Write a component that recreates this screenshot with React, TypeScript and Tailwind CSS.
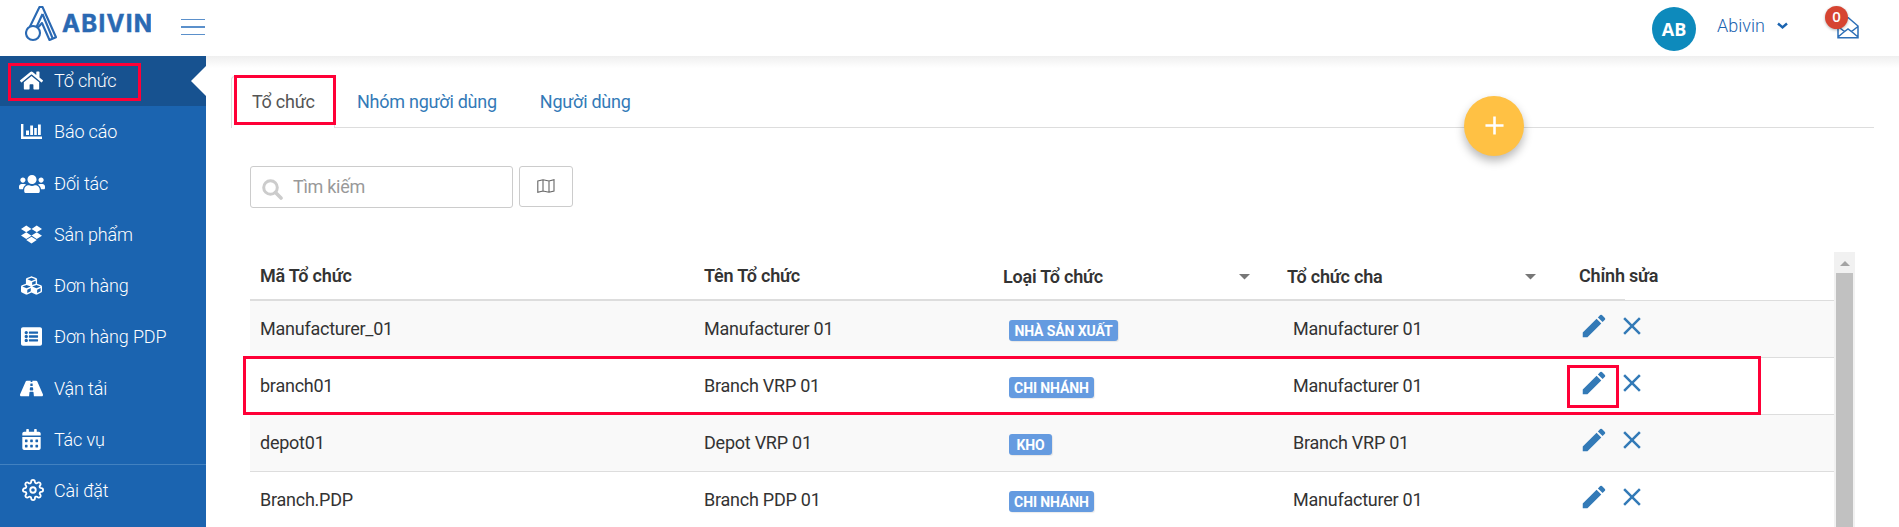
import React from "react";
import { FaHome, FaUsers, FaDropbox, FaCubes, FaListAlt, FaRoad, FaCalendarAlt } from "react-icons/fa";
import { FiSettings } from "react-icons/fi";
import { MdEdit, MdClose, MdAdd } from "react-icons/md";

const ROBOTO = "font-[Roboto,'Liberation_Sans',sans-serif]";

function BarsIcon({ size }: { size: number }) {
  return (
    <svg width={size} height={size} viewBox="0 0 21 21" fill="currentColor">
      <path d="M0 3 H2.4 V15.6 H21 V18 H0 Z M5 9.5 H8 V14 H5 Z M9.2 4.5 H12 V14 H9.2 Z M13.2 7 H15.8 V14 H13.2 Z M17 3.5 H19.8 V14 H17 Z" />
    </svg>
  );
}

const nav = [
  { label: "Tổ chức", Icon: FaHome, size: 23, offset: "pb-px" },
  { label: "Báo cáo", Icon: BarsIcon, size: 21, offset: "pb-[2px]" },
  { label: "Đối tác", Icon: FaUsers, size: 26, offset: "" },
  { label: "Sản phẩm", Icon: FaDropbox, size: 21, offset: "" },
  { label: "Đơn hàng", Icon: FaCubes, size: 21, offset: "" },
  { label: "Đơn hàng PDP", Icon: FaListAlt, size: 21, offset: "" },
  { label: "Vận tải", Icon: FaRoad, size: 23, offset: "pt-[2px]" },
  { label: "Tác vụ", Icon: FaCalendarAlt, size: 21, offset: "pt-[2px]" },
];

const rows = [
  { code: "Manufacturer_01", name: "Manufacturer 01", type: "NHÀ SẢN XUẤT", parent: "Manufacturer 01", width: "w-[109px]" },
  { code: "branch01", name: "Branch VRP 01", type: "CHI NHÁNH", parent: "Manufacturer 01", width: "w-[85px]" },
  { code: "depot01", name: "Depot VRP 01", type: "KHO", parent: "Branch VRP 01", width: "w-[43px]" },
  { code: "Branch.PDP", name: "Branch PDP 01", type: "CHI NHÁNH", parent: "Manufacturer 01", width: "w-[85px]" },
];

function Logo() {
  return (
    <svg width="126" height="36" viewBox="0 0 126 36" fill="none" stroke="#2a69b3" strokeWidth="2.1">
      <circle cx="8" cy="27" r="7" />
      <path d="M5 20.5 L14.5 1 H17.5 L31 31.2 L24.5 34 L17 17 L12.5 22" strokeLinejoin="round" />
      <path d="M17.5 8 L11.5 21 M17.5 8 L27.5 32" />
      <text x="37" y="26" fill="#2a69b3" strokeWidth="0.5" fontFamily="Inter, sans-serif" fontWeight="700" fontSize="24" textLength="90" lengthAdjust="spacing">ABIVIN</text>
    </svg>
  );
}

function Header() {
  return (
    <header className="relative z-10 flex h-14 shrink-0 items-start bg-white">
      <div className="pt-[6px] pl-[25px]"><Logo /></div>
      <div className="mt-[19px] ml-[30px] flex w-6 flex-col">
        <span className="h-px bg-[#5b90cb]" />
        <span className="mt-[6px] h-[2px] bg-[#5b90cb]" />
        <span className="mt-[6px] h-px bg-[#5b90cb]" />
      </div>
      <div className="mt-[7px] ml-auto flex size-11 items-center justify-center rounded-full bg-[#0d8abc] font-['Open_Sans',sans-serif] text-[18px] font-bold text-white">AB</div>
      <div className="mt-[12px] ml-[21px] w-[60px] text-[18px] leading-[27px] font-light text-[#1b64b0]">Abivin</div>
      <svg className="mt-[22px]" width="11" height="8" viewBox="0 0 11 8" fill="none" stroke="#1b64b0" strokeWidth="2.4"><path d="M1 1.5 L5.5 5.5 L10 1.5" /></svg>
      <div className="relative mt-[17px] mr-10 ml-[49px] h-[22px] w-[22px]">
        <svg width="22" height="22" viewBox="0 0 22 22" fill="none" stroke="#2d6fb7" strokeWidth="1.5"><path d="M1 9 L11 .5 L21 9 V20.7 H1 Z M1 9.5 L7.5 14.5 L11 12 L14.5 14.5 L21 9.5 M1 20 L7.5 14.5 M21 20 L14.5 14.5" /></svg>
        <span className="absolute -top-[11px] -left-[12px] flex size-[23px] items-center justify-center rounded-full bg-[#d64431] pb-[3px] font-['Open_Sans',sans-serif] text-[15px] leading-none font-semibold text-white shadow-[0_1px_3px_rgba(0,0,0,0.3)]">0</span>
      </div>
    </header>
  );
}

function Sidebar() {
  return (
    <aside className="w-[206px] shrink-0 bg-[#1b64b0] text-[18px] font-light tracking-[-0.15px] text-white">
      {nav.map(({ label, Icon, size, offset }, i) => (
        <div key={label} className={`relative flex h-[51px] items-center ${offset} ${i === 0 ? "border-b border-[#1b64b0] bg-[#175290]" : ""}`}>
          <span className="flex w-[63px] shrink-0 justify-center"><Icon size={size} /></span>
          <span className="-ml-[9px]">{label}</span>
          {i === 0 && <span className="absolute top-[10px] right-0 h-[30px] w-[15px] bg-white [clip-path:polygon(100%_0,0_50%,100%_100%)]" />}
        </div>
      ))}
      <div className="flex h-[52px] items-center border-t border-[#4281c0]">
        <span className="flex w-[65px] shrink-0 justify-center pb-[2px]"><FiSettings size={22} /></span>
        <span className="-ml-[11px]">Cài đặt</span>
      </div>
    </aside>
  );
}

function Caret() {
  return <svg width="11" height="6" viewBox="0 0 11 6" fill="#777"><path d="M0 0 H11 L5.5 5.5 Z" /></svg>;
}

const COLS = "grid grid-cols-[444px_299px_284px_292px_1fr] pl-[10px]";

function OrgTable() {
  return (
    <div className="mt-[44px] flex min-h-0 flex-1 overflow-hidden pl-[19px]">
      <div className="w-[1584px] shrink-0">
        <div className={`${COLS} h-[47px] font-semibold leading-[47px] tracking-[-0.2px]`}>
          <span>Mã Tổ chức</span>
          <span>Tên Tổ chức</span>
          <span className="flex items-center justify-between pt-px pr-[37px]"><span>Loại Tổ chức</span><Caret /></span>
          <span className="flex items-center justify-between pt-px pr-[43px]"><span>Tổ chức cha</span><Caret /></span>
          <span>Chỉnh sửa</span>
        </div>
        <div className="h-px w-[1375px] bg-[#ddd]" />
        <div className="h-px bg-[#ddd]" />
        {rows.map((r, i) => (
          <div key={i} className={`${COLS} h-[57px] border-b border-[#ddd] leading-[56px] tracking-[-0.24px] ${i % 2 === 0 ? "bg-[#f9f9f9]" : "bg-white"}`}>
            <span>{r.code}</span>
            <span>{r.name}</span>
            <span className="pt-[19px] pl-[6px]">
              <span className={`flex h-[21px] ${r.width} items-center justify-center rounded-[3px] bg-[#659be0] text-[14px] leading-none font-bold whitespace-nowrap tracking-[-0.1px] text-white shadow-[1px_1px_1px_rgba(0,0,0,0.08)]`}>{r.type}</span>
            </span>
            <span className="pl-[6px]">{r.parent}</span>
            <span className="flex items-start gap-[8px] pt-[10px] text-[#337ab7]">
              <MdEdit size={30} />
              <MdClose size={30} />
            </span>
          </div>
        ))}
      </div>
      <div className="flex w-[21px] shrink-0 flex-col items-center bg-[#f1f1f1]">
        <svg className="mt-[9px]" width="10" height="5" viewBox="0 0 10 5" fill="#a3a3a3"><path d="M0 5 H10 L5 0 Z" /></svg>
        <div className="mt-[7px] w-[17px] flex-1 bg-[#c1c1c1]" />
      </div>
    </div>
  );
}

export default function App() {
  return (
    <div className={`relative flex h-[527px] w-[1899px] flex-col overflow-hidden bg-white text-[18px] text-[#333] ${ROBOTO}`}>
      <Header />
      <div className="flex min-h-0 flex-1">
        <Sidebar />
        <main className="flex flex-1 flex-col bg-[linear-gradient(#efefef,#ffffff_12px)] pt-5 pr-[25px] pl-[25px]">
          <nav className="flex h-[52px] shrink-0 border-b border-[#ddd] tracking-[-0.26px] text-[#337ab7]">
            <div className="h-[52px] w-[104px] rounded-t border border-b-0 border-[#ddd] bg-white pl-5 leading-[49px] text-[#555]">Tổ chức</div>
            <div className="pl-[22px] leading-[51px]">Nhóm người dùng</div>
            <div className="pl-[43px] leading-[51px]">Người dùng</div>
          </nav>
          <div className="mt-[38px] flex shrink-0 items-start gap-[6px] pl-[19px]">
            <div className="flex h-[42px] w-[263px] items-center rounded-[3px] border border-[#ccc] pl-[11px] text-[#999]">
              <svg className="mt-[4px]" width="21" height="21" viewBox="0 0 21 21" fill="none" stroke="#ccc" strokeWidth="3"><circle cx="8.5" cy="8.5" r="6.8" /><path d="M13.5 13.5 L19 19" strokeLinecap="round" strokeWidth="3.6" /></svg>
              <span className="-mt-[2px] ml-[10px] tracking-[-0.3px]">Tìm kiếm</span>
            </div>
            <div className="flex h-[41px] w-[54px] items-center justify-center rounded-[3px] border border-[#ccc] pb-[2px]">
              <svg width="18" height="14" viewBox="0 0 18 14" fill="none" stroke="#666" strokeWidth="1.1"><path d="M.8 2 L6 .7 L12 2 L17 .7 V12 L12 13.2 L6 12 L.8 13.2 Z M6 .7 V12 M12 2 V13.2" /></svg>
            </div>
          </div>
          <OrgTable />
        </main>
      </div>
      <button className="absolute top-[96px] left-[1464px] flex size-[60px] items-center justify-center rounded-full bg-[#ffc144] pb-px text-white shadow-[0_5px_10px_rgba(0,0,0,0.28)]">
        <MdAdd size={31} />
      </button>
      <div className="absolute top-[63px] left-[8px] z-20 h-[38px] w-[133px] border-3 border-[#ff0037]" />
      <div className="absolute top-[75px] left-[234px] z-20 h-[50px] w-[102px] border-3 border-[#ff0037]" />
      <div className="absolute top-[356px] left-[243px] z-20 h-[59px] w-[1518px] border-3 border-[#ff0037]" />
      <div className="absolute top-[365px] left-[1567px] z-20 h-[43px] w-[52px] border-3 border-[#ff0037]" />
    </div>
  );
}
